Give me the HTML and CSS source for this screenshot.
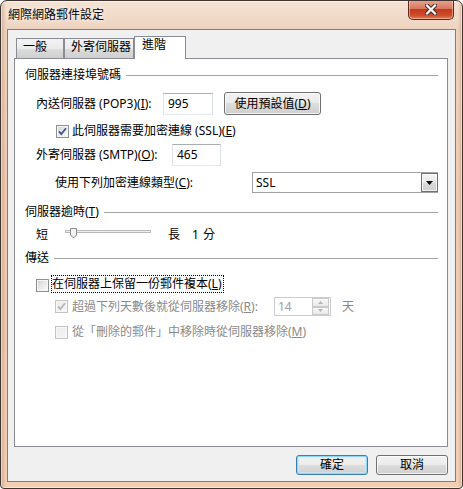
FILE: index.html
```html
<!DOCTYPE html>
<html lang="zh-Hant">
<head>
<meta charset="utf-8">
<title>網際網路郵件設定</title>
<link rel="stylesheet" href="styles.css">
</head>
<body>
<div class="window">
  <div class="titlebar">
    <div class="title">網際網路郵件設定</div>
    <div class="close">
      <svg width="12" height="11" viewBox="0 0 12 11"><path d="M2 1.5 L10 9.5 M10 1.5 L2 9.5" stroke="#4a2a22" stroke-width="4.2" stroke-linecap="square"/><path d="M2 1.5 L10 9.5 M10 1.5 L2 9.5" stroke="#ffffff" stroke-width="2.2" stroke-linecap="square"/></svg>
    </div>
  </div>
  <div class="client">
    <div class="tabs">
      <div class="tab tab-general">一般</div>
      <div class="tab tab-outgoing">外寄伺服器</div>
      <div class="tab tab-active">進階</div>
    </div>
    <div class="panel">
      <div class="group g-ports"><span class="group-title">伺服器連接埠號碼</span><span class="group-rule"></span></div>
      <div class="row row-pop">
        <span class="label label-pop">內送伺服器 (POP3)(<u>I</u>):</span>
        <span class="textbox box-pop">995</span>
        <span class="button button-defaults">使用預設值(<u>D</u>)</span>
      </div>
      <div class="row row-ssl">
        <span class="checkbox"><svg width="11" height="11" viewBox="0 0 11 11"><path d="M2 5.3 L4.3 8 L9 2.2" fill="none" stroke="#3f5587" stroke-width="1.8"/></svg></span>
        <span class="cb-text">此伺服器需要加密連線 (SSL)(<u>E</u>)</span>
      </div>
      <div class="row row-smtp">
        <span class="label label-smtp">外寄伺服器 (SMTP)(<u>O</u>):</span>
        <span class="textbox box-smtp">465</span>
      </div>
      <div class="row row-enc">
        <span class="label label-enc">使用下列加密連線類型(<u>C</u>):</span>
        <span class="combo">
          <span class="combo-value">SSL</span>
          <span class="combo-btn"><svg width="7" height="4" viewBox="0 0 7 4"><path d="M0 0 H7 L3.5 4 Z" fill="#000"/></svg></span>
        </span>
      </div>

      <div class="group g-timeout"><span class="group-title">伺服器逾時(<u>T</u>)</span><span class="group-rule"></span></div>
      <div class="row row-slider">
        <span class="label">短</span>
        <svg class="slider" width="86" height="16" viewBox="0 0 86 16">
          <rect x="0.5" y="3.5" width="85" height="2" fill="#eef0f0" stroke="#b9b9b9"/>
          <path d="M5.5 1.5 H11.5 V8 L8.5 11 L5.5 8 Z" fill="#f3f3f3" stroke="#8a8a8a"/>
        </svg>
        <span class="label slider-long">長</span>
        <span class="label slider-num">1</span>
        <span class="label slider-unit">分</span>
      </div>

      <div class="group g-deliver"><span class="group-title">傳送</span><span class="group-rule"></span></div>
      <div class="row row-keep">
        <span class="checkbox"></span>
        <span class="focus-text">在伺服器上保留一份郵件複本(<u>L</u>)</span>
      </div>
      <div class="row row-remove">
        <span class="checkbox disabled"><svg width="11" height="11" viewBox="0 0 11 11"><path d="M2 5.3 L4.3 8 L9 2.2" fill="none" stroke="#b4b4b4" stroke-width="1.8"/></svg></span>
        <span class="cb-text muted remove-text">超過下列天數後就從伺服器移除(<u>R</u>):</span>
        <span class="spin">
          <span class="spin-value">14</span>
          <span class="spin-btns">
            <span class="spin-btn"><svg width="5" height="3" viewBox="0 0 5 3"><path d="M0 3 L2.5 0 L5 3 Z" fill="#b5b5b5"/></svg></span>
            <span class="spin-btn"><svg width="5" height="3" viewBox="0 0 5 3"><path d="M0 0 L2.5 3 L5 0 Z" fill="#b5b5b5"/></svg></span>
          </span>
        </span>
        <span class="label muted days">天</span>
      </div>
      <div class="row row-deleted">
        <span class="checkbox disabled"></span>
        <span class="cb-text muted">從「刪除的郵件」中移除時從伺服器移除(<u>M</u>)</span>
      </div>
    </div>
    <div class="footer">
      <span class="button button-ok">確定</span>
      <span class="button">取消</span>
    </div>
  </div>
</div>
</body>
</html>
```

FILE: styles.css
```css
* { box-sizing: border-box; }
html, body { margin: 0; padding: 0; }
body {
  width: 463px;
  height: 489px;
  overflow: hidden;
  background: #ffffff;
  font-family: "Noto Sans", "Noto Sans CJK TC", sans-serif;
  font-size: 12px;
  color: #000;
}
u { text-decoration: underline; text-underline-offset: 1px; }

.window {
  width: 463px;
  height: 489px;
  border: 1px solid #3e3430;
  border-radius: 7px 7px 4px 4px;
  background:
    linear-gradient(90deg, rgba(160,110,80,0.35) 0, rgba(160,110,80,0) 5px, rgba(0,0,0,0) 457px, rgba(150,100,70,0.3) 461px),
    linear-gradient(180deg, #f4e2d4 0%, #eed3bf 6%, #eecbb0 40%, #f1cfb5 100%);
  box-shadow: inset 0 0 0 1px rgba(255,255,255,0.5);
  display: flex;
  flex-direction: column;
  overflow: hidden;
}

.titlebar {
  height: 28px;
  flex: none;
  display: flex;
  justify-content: space-between;
  align-items: flex-start;
  padding: 0 8px 0 7px;
}
.title {
  margin-top: 6px;
  line-height: 16px;
  font-size: 12px;
  color: #000;
  text-shadow: 0 0 6px rgba(255,255,255,0.9), 0 0 3px rgba(255,255,255,0.9);
}
.close {
  margin-top: -1px;
  width: 46px;
  height: 20px;
  border: 1px solid #5a2a20;
  border-top: none;
  border-radius: 0 0 5px 5px;
  background: linear-gradient(180deg, #e9a595 0%, #d9775f 45%, #c4391c 50%, #cf4a2a 80%, #e0805d 100%);
  box-shadow: inset 0 0 0 1px rgba(255,220,200,0.5);
  display: flex;
  align-items: center;
  justify-content: center;
}
.close svg { display: block; }

.client {
  margin: 0 6px;
  height: 453px;
  flex: none;
  border: 1px solid #7b7e82;
  background: #f0f0f0;
  padding: 6px 7px 0 6px;
  display: flex;
  flex-direction: column;
}

.tabs {
  height: 22px;
  display: flex;
  align-items: flex-end;
  padding-left: 2px;
  position: relative;
  z-index: 1;
}
.tab {
  height: 20px;
  line-height: 16px;
  border: 1px solid #898c95;
  border-bottom: none;
  background: linear-gradient(180deg, #f3f3f3 0%, #ebebeb 50%, #dddddd 51%, #cfcfcf 100%);
  padding-left: 6px;
  white-space: nowrap;
}
.tab-general { width: 48px; }
.tab-outgoing { width: 70px; }
.tab-active {
  width: 52px;
  height: 23px;
  margin-bottom: -1px;
  background: #ffffff;
  padding-left: 7px;
}

.panel {
  height: 389px;
  flex: none;
  border: 1px solid #898c95;
  background: #ffffff;
  padding: 0 9px 0 10px;
  display: flex;
  flex-direction: column;
}

.group {
  height: 16px;
  display: flex;
  align-items: center;
  line-height: 16px;
}
.group-title { white-space: nowrap; }
.group-rule {
  flex: 1;
  height: 1px;
  background: #a3a3a3;
  margin-left: 5px;
}
.g-ports { margin-top: 8px; }
.g-timeout { margin-top: 11px; }
.g-deliver { margin-top: 7px; }

.row {
  display: flex;
  align-items: center;
  line-height: 16px;
  white-space: nowrap;
}
.label { line-height: 16px; flex: none; }

.row-pop { margin-top: 9px; height: 23px; padding-left: 11px; }
.label-pop { width: 127px; }
.row-ssl { margin-top: 8px; height: 16px; padding-left: 31px; }
.row-smtp { margin-top: 5px; height: 22px; padding-left: 11px; }
.label-smtp { width: 136px; }
.row-enc { margin-top: 6px; height: 21px; padding-left: 30px; }
.label-enc { width: 197px; }
.row-slider { margin-top: 7px; height: 16px; padding-left: 11px; }
.row-keep { margin-top: 9px; height: 18px; padding-left: 11px; align-items: flex-start; }
.row-remove { margin-top: 4px; height: 19px; padding-left: 30px; }
.row-deleted { margin-top: 8px; height: 16px; padding-left: 30px; }

.textbox {
  height: 22px;
  border: 1px solid;
  border-color: #abadb3 #dbdfe6 #e3e9ef #e2e3ea;
  background: #fff;
  padding: 2px 0 0 4px;
  line-height: 16px;
}
.box-pop { width: 50px; }
.box-smtp { width: 49px; }

.button {
  height: 20px;
  width: 72px;
  border: 1px solid #707070;
  border-radius: 3px;
  background: linear-gradient(180deg, #f2f2f2 0%, #ebebeb 49%, #dddddd 50%, #cfcfcf 100%);
  box-shadow: inset 0 0 0 1px rgba(255,255,255,0.75);
  display: flex;
  align-items: center;
  justify-content: center;
  line-height: 16px;
  flex: none;
}
.button-defaults {
  width: 97px;
  height: 23px;
  margin-left: 11px;
}
.button-ok {
  border-color: #3c7fb1;
  box-shadow: inset 0 0 0 1px #8ed6f8, inset 0 0 0 2px rgba(200,235,252,0.6);
}

.checkbox {
  width: 13px;
  height: 13px;
  flex: none;
  border: 1px solid #8e8f8f;
  background: linear-gradient(135deg, #cdd0d4 0%, #e6e7e9 45%, #fbfbfb 100%);
  box-shadow: inset 0 0 0 1px #f7f7f7;
  display: flex;
}
.checkbox svg { display: block; }
.checkbox.disabled {
  border-color: #c3c3c3;
  background: linear-gradient(135deg, #ececec 0%, #f6f6f6 100%);
}
.row-keep .checkbox { margin-top: 4px; }
.cb-text { margin-left: 3px; line-height: 16px; }
.row-remove .cb-text, .row-deleted .cb-text { margin-left: 4px; }
.muted { color: #8a8a8a; }
.remove-text { width: 202px; flex: none; }

.focus-text {
  margin-left: 2px;
  border: 1px dotted #000;
  padding-right: 1px;
  line-height: 16px;
  height: 18px;
}

.combo {
  width: 186px;
  height: 21px;
  border: 1px solid #a2a2a2;
  background: #fff;
  display: flex;
  align-items: center;
  justify-content: space-between;
  padding: 0 0 0 3px;
}
.combo-value { line-height: 16px; }
.combo-btn {
  width: 17px;
  height: 19px;
  border: 1px solid #707070;
  background: linear-gradient(180deg, #f4f4f4 0%, #e8e8e8 50%, #dadada 51%, #d0d0d0 100%);
  box-shadow: inset 0 0 0 1px rgba(255,255,255,0.7);
  display: flex;
  align-items: center;
  justify-content: center;
  margin-right: -1px;
  padding-top: 1px;
}
.combo-btn svg { display: block; }

.slider { display: block; margin-left: 17px; flex: none; }
.slider-long { margin-left: 17px; }
.slider-num { margin-left: 12px; }
.slider-unit { margin-left: 4px; }

.spin {
  width: 57px;
  height: 19px;
  border: 1px solid #c8cdd2;
  background: #fff;
  display: flex;
  justify-content: space-between;
  flex: none;
}
.spin-value { color: #a0a0a0; line-height: 16px; padding: 1px 0 0 3px; font-size: 12px; }
.spin-btns {
  width: 17px;
  display: flex;
  flex-direction: column;
  margin: 0 1px 0 0;
}
.spin-btn {
  flex: 1;
  border: 1px solid #c9c9c9;
  background: linear-gradient(180deg, #f7f7f7, #e9e9e9);
  display: flex;
  align-items: center;
  justify-content: center;
}
.spin-btn svg { display: block; }
.days { margin-left: 11px; }

.footer {
  margin-top: 8px;
  display: flex;
  justify-content: flex-end;
  gap: 8px;
}
```
